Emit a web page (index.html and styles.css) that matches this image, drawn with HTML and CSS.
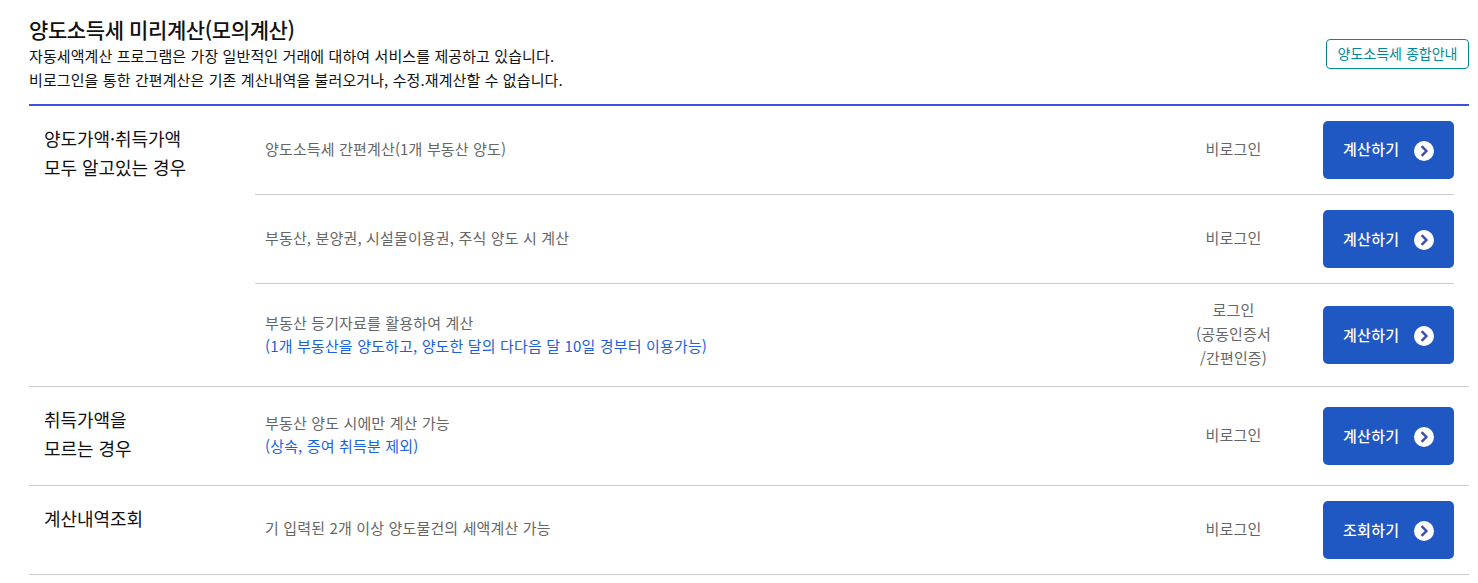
FILE: index.html
```html
<!DOCTYPE html>
<html lang="ko">
<head>
    <meta charset="UTF-8">
    <meta name="viewport" content="width=device-width, initial-scale=1.0">
    <title>양도소득세 미리계산</title>
    <link rel="stylesheet" href="styles.css">
</head>
<body>
    <div class="calc_wrap">
        <div class="calc_header">
            <div class="header_text">
                <h2 class="calc_title">양도소득세 미리계산(모의계산)</h2>
                <p>자동세액계산 프로그램은 가장 일반적인 거래에 대하여 서비스를 제공하고 있습니다.</p>
                <p>비로그인을 통한 간편계산은 기존 계산내역을 불러오거나, 수정.재계산할 수 없습니다.</p>
            </div>
            <a class="guide_btn">양도소득세 종합안내</a>
        </div>

        <div class="group">
            <div class="group_title">양도가액·취득가액<br>모두 알고있는 경우</div>
            <div class="group_rows">
                <div class="row row_a">
                    <div class="row_desc">양도소득세 간편계산(1개 부동산 양도)</div>
                    <div class="row_login">비로그인</div>
                    <a class="calc_btn"><span class="btn_label">계산하기</span> <svg class="arrow" viewBox="0 0 20 20"><circle cx="10" cy="10" r="10" fill="#fff"/><path d="M7.6 5.2 12.4 10 7.6 14.8" fill="none" stroke="#3f4aa8" stroke-width="2.4"/></svg></a>
                </div>
                <div class="row row_b">
                    <div class="row_desc">부동산, 분양권, 시설물이용권, 주식 양도 시 계산</div>
                    <div class="row_login">비로그인</div>
                    <a class="calc_btn"><span class="btn_label">계산하기</span> <svg class="arrow" viewBox="0 0 20 20"><circle cx="10" cy="10" r="10" fill="#fff"/><path d="M7.6 5.2 12.4 10 7.6 14.8" fill="none" stroke="#3f4aa8" stroke-width="2.4"/></svg></a>
                </div>
                <div class="row row_c">
                    <div class="row_desc">부동산 등기자료를 활용하여 계산<br><span class="note">(1개 부동산을 양도하고, 양도한 달의 다다음 달 10일 경부터 이용가능)</span></div>
                    <div class="row_login">로그인<br>(공동인증서<br>/간편인증)</div>
                    <a class="calc_btn"><span class="btn_label">계산하기</span> <svg class="arrow" viewBox="0 0 20 20"><circle cx="10" cy="10" r="10" fill="#fff"/><path d="M7.6 5.2 12.4 10 7.6 14.8" fill="none" stroke="#3f4aa8" stroke-width="2.4"/></svg></a>
                </div>
            </div>
        </div>

        <div class="group">
            <div class="group_title">취득가액을<br>모르는 경우</div>
            <div class="group_rows">
                <div class="row row_d">
                    <div class="row_desc">부동산 양도 시에만 계산 가능<br><span class="note">(상속, 증여 취득분 제외)</span></div>
                    <div class="row_login">비로그인</div>
                    <a class="calc_btn"><span class="btn_label">계산하기</span> <svg class="arrow" viewBox="0 0 20 20"><circle cx="10" cy="10" r="10" fill="#fff"/><path d="M7.6 5.2 12.4 10 7.6 14.8" fill="none" stroke="#3f4aa8" stroke-width="2.4"/></svg></a>
                </div>
            </div>
        </div>

        <div class="group">
            <div class="group_title">계산내역조회</div>
            <div class="group_rows">
                <div class="row row_e">
                    <div class="row_desc">기 입력된 2개 이상 양도물건의 세액계산 가능</div>
                    <div class="row_login">비로그인</div>
                    <a class="calc_btn"><span class="btn_label">조회하기</span> <svg class="arrow" viewBox="0 0 20 20"><circle cx="10" cy="10" r="10" fill="#fff"/><path d="M7.6 5.2 12.4 10 7.6 14.8" fill="none" stroke="#3f4aa8" stroke-width="2.4"/></svg></a>
                </div>
            </div>
        </div>
    </div>
</body>
</html>
```

FILE: styles.css
```css
*{
    padding: 0;
    margin: 0;
    box-sizing: border-box;
}

body{
    background: #fff;
    font-family: "Noto Sans CJK KR", "Noto Sans", sans-serif;
    color: #111;
}

.calc_wrap{
    margin: 0 9px 0 29px;
}

.calc_header{
    display: flex;
    align-items: flex-end;
    justify-content: space-between;
    height: 106px;
    padding: 14px 0 12px;
    border-bottom: 2px solid #3f4fe0;
}

.calc_title{
    font-size: 21px;
    font-weight: 500;
    line-height: 30px;
    letter-spacing: -0.4px;
}

.header_text p{
    font-size: 15px;
    line-height: 24px;
    letter-spacing: 0.1px;
}

.guide_btn{
    display: block;
    width: 143px;
    height: 30px;
    margin-bottom: 23px;
    border: 1px solid #00899b;
    border-radius: 4px;
    color: #00899b;
    font-size: 14px;
    line-height: 26px;
    text-align: center;
}

.group{
    display: flex;
    border-bottom: 1px solid #ccc;
}

.group_title{
    width: 226px;
    flex-shrink: 0;
    padding: 18px 0 0 15px;
    font-size: 18px;
    line-height: 29px;
    letter-spacing: -0.05px;
}

.group_rows{
    flex: 1;
}

.row{
    display: flex;
    align-items: center;
    margin-right: 15px;
    color: #666;
    font-size: 15px;
    letter-spacing: 0.15px;
    line-height: 23px;
}

.row_a, .row_b{
    border-bottom: 1px solid #ccc;
}

.row_a{ height: 89px; padding-bottom: 1px; }
.row_b{ height: 89px; }
.row_c{ height: 102px; }
.row_d{ height: 98px; }
.row_e{ height: 88px; }

.row_desc{
    flex: 1;
    padding: 0 0 2px 10px;
}

.row_b .row_desc{ padding-bottom: 4px; }
.row_c .row_desc{ padding-bottom: 3px; }
.row_d .row_desc{ padding-bottom: 4px; }
.row_e .row_desc{ padding-bottom: 6px; }

.note{
    color: #1c62d8;
}

.row_login{
    width: 100px;
    margin-right: 39.5px;
    padding-bottom: 2px;
    text-align: center;
    line-height: 24px;
}

.calc_btn{
    display: flex;
    align-items: center;
    justify-content: space-between;
    width: 131px;
    height: 58px;
    padding: 0 20px;
    background: #1f57c3;
    border-radius: 5px;
    color: #fff;
    font-size: 15px;
    font-weight: 500;
    letter-spacing: 0.3px;
}

.btn_label{
    padding-bottom: 2px;
}

.arrow{
    width: 20px;
    height: 20px;
    margin-top: 2px;
}
```
